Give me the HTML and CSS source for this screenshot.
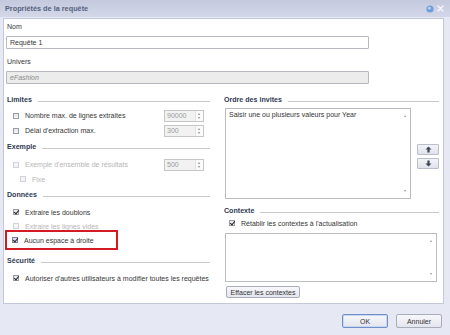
FILE: index.html
```html
<!DOCTYPE html>
<html lang="fr">
<head>
<meta charset="utf-8">
<title>Propriétés de la requête</title>
<link rel="stylesheet" href="styles.css">
</head>
<body>
<div class="dialog">
  <div class="titlebar">
    <span class="title">Propriétés de la requête</span>
    <span class="tb-icons">
      <svg class="help" width="8" height="8" viewBox="0 0 8 8"><circle cx="4" cy="4" r="3.6" fill="#6f9fd8"/><circle cx="3.3" cy="3.2" r="1.4" fill="#b9d4f2"/></svg>
      <svg class="close" width="7" height="7" viewBox="0 0 7 7"><path d="M1 1L6 6M6 1L1 6" stroke="#f4f5fa" stroke-width="1.6" stroke-linecap="round"/></svg>
    </span>
  </div>
  <div class="panel">
    <div class="lbl first">Nom</div>
    <div class="field">Requête 1</div>
    <div class="lbl second">Univers</div>
    <div class="field disabled">eFashion</div>

    <div class="columns">
      <div class="col left">
        <div class="hdr"><span>Limites</span></div>
        <div class="row r15"><span class="cb"></span><span class="txt">Nombre max. de lignes extraites</span><span class="spin dis">90000<i class="arr"></i></span></div>
        <div class="row r15"><span class="cb"></span><span class="txt">Délai d'extraction max.</span><span class="spin dis">300<i class="arr"></i></span></div>
        <div class="hdr mt"><span>Exemple</span></div>
        <div class="row r15 grey"><span class="cb off"></span><span class="txt">Exemple d'ensemble de résultats</span><span class="spin dis">500<i class="arr"></i></span></div>
        <div class="row r14 grey indent"><span class="cb off"></span><span class="txt">Fixe</span></div>
        <div class="hdr mt"><span>Données</span></div>
        <div class="row r14"><span class="cb on"></span><span class="txt">Extraire les doublons</span></div>
        <div class="row r14 grey"><span class="cb off"></span><span class="txt">Extraire les lignes vides</span></div>
        <div class="row r14 mark-wrap">
          <div class="mark"><span class="cb on hl"></span><span class="txt">Aucun espace à droite</span></div>
        </div>
        <div class="hdr mt2"><span>Sécurité</span></div>
        <div class="row r14"><span class="cb on"></span><span class="txt">Autoriser d'autres utilisateurs à modifier toutes les requêtes</span></div>
      </div>

      <div class="col right">
        <div class="hdr"><span>Ordre des invites</span></div>
        <div class="prompt-row">
          <div class="listbox">
            <span class="item">Saisir une ou plusieurs valeurs pour Year</span>
            <span class="sc up"></span><span class="sc down"></span>
          </div>
          <div class="movers">
            <div class="mv"><svg width="7" height="7" viewBox="0 0 7 7"><path d="M3.5 0.5L6.5 3.5H4.6V6.5H2.4V3.5H0.5Z" fill="#3e4656"/></svg></div>
            <div class="mv"><svg width="7" height="7" viewBox="0 0 7 7"><path d="M3.5 6.5L6.5 3.5H4.6V0.5H2.4V3.5H0.5Z" fill="#3e4656"/></svg></div>
          </div>
        </div>
        <div class="hdr ctx"><span>Contexte</span></div>
        <div class="row r12"><span class="cb on"></span><span class="txt">Rétablir les contextes à l'actualisation</span></div>
        <div class="ctxbox"><span class="sc up"></span><span class="sc down"></span></div>
        <div class="btn small">Effacer les contextes</div>
      </div>
    </div>
  </div>
  <div class="footer">
    <div class="btn main ok">OK</div>
    <div class="btn main">Annuler</div>
  </div>
</div>
</body>
</html>
```
FILE: styles.css
```css
* { box-sizing: border-box; }
html, body { margin: 0; padding: 0; }
body {
  width: 450px; height: 335px; overflow: hidden;
  background: #e6e8f3;
  font-family: "Liberation Sans", Arial, sans-serif;
  font-size: 7px;
  color: #363636;
}
.dialog { width: 450px; height: 335px; }
.titlebar {
  height: 17px;
  background: linear-gradient(#c4c9de, #d3d7e8);
  display: flex; align-items: center; justify-content: space-between;
  padding: 0 5px 0 5px;
}
.title { font-weight: bold; font-size: 7.3px; color: #56627e; }
.tb-icons { display: flex; align-items: center; gap: 3px; margin-right: 1px; }
.panel {
  margin: 1px 6px 0 3px;
  height: 286px;
  background: #fff;
  border: 1px solid #c3c8db;
  padding: 0 3px 0 3px;
}
.lbl { height: 10px; line-height: 10px; }
.lbl.first { margin-top: 3px; }
.lbl.second { margin-top: 8px; }
.field {
  margin-top: 4px; margin-left: -1px;
  width: 363px; height: 13px;
  border: 1px solid #b5b8bf; border-radius: 1px;
  padding: 0 3px; line-height: 11px;
}
.field.disabled { background: #ececec; color: #8a8a8a; font-style: italic; }
.columns { display: flex; gap: 13px; margin-top: 10px; }
.col.left { width: 204px; }
.col.right { width: 216px; }
.hdr {
  height: 12px; line-height: 12px;
  display: flex; align-items: center; gap: 6px;
  font-weight: bold; color: #2f3a52; font-size: 7.1px;
  margin-bottom: 2px;
}
.hdr::after { content: ""; flex: 1; height: 1px; background: #c8c8c8; margin-top: 2px; margin-right: 1px; }
.left .hdr.mt { margin-top: 3px; margin-bottom: 4px; }
.left .hdr.mt2 { margin-top: 8px; margin-bottom: 4px; }
.row { display: flex; align-items: center; padding-left: 6px; }
.r15 { height: 15px; }
.r14 { height: 14px; }
.r12 { height: 12px; padding-left: 5px; }
.row.indent { padding-left: 13px; }
.row.grey { color: #b6b6b6; }
.cb {
  width: 6px; height: 6px; flex: none;
  border: 1px solid #9a9ca4;
  background: linear-gradient(#e4e5ea, #f8f8fa);
  position: relative;
  margin-right: 6px;
}
.cb.off { border-color: #d2d3d8; background: #f4f4f6; }
.cb.on::after {
  content: ""; position: absolute; left: 1px; top: -1px;
  width: 2px; height: 4px;
  border: solid #222; border-width: 0 1.3px 1.3px 0;
  transform: rotate(40deg);
}
.cb.hl { background: #dcdcf0; border-color: #7c7ea8; }
.txt { white-space: nowrap; }
.spin {
  margin-left: auto; margin-right: 7px;
  width: 40px; height: 12px;
  border: 1px solid #c6c6c6;
  background: #f2f2f2; color: #9a9a9a;
  line-height: 10px; padding-left: 2px;
  position: relative;
}
.arr { position: absolute; right: 0; top: 0; width: 8px; height: 10px; background: #fafafa; border-left: 1px solid #e2e2e2; }
.arr::before, .arr::after {
  content: ""; position: absolute; left: 2px;
  border-left: 1.5px solid transparent; border-right: 1.5px solid transparent;
}
.arr::before { top: 2px; border-bottom: 2px solid #888; }
.arr::after { bottom: 2px; border-top: 2px solid #888; }
.mark-wrap { height: 20px; padding-left: 0; margin-top: -3px; margin-bottom: -3px; }
.mark {
  display: flex; align-items: center;
  width: 113px; height: 20px; margin-left: -2px;
  border: 2.5px solid #d41b24;
  padding-left: 5px;
}
.prompt-row { display: flex; }
.listbox {
  width: 186px; height: 91px; margin-left: 1px;
  border: 1px solid #b9bcc3;
  position: relative; padding: 2px 3px;
}
.item { color: #333; }
.sc { position: absolute; right: 4px; border-left: 1.5px solid transparent; border-right: 1.5px solid transparent; }
.sc.up { top: 6px; border-bottom: 2px solid #999; }
.sc.down { bottom: 6px; border-top: 2px solid #999; }
.movers { margin-left: 6px; margin-top: 36px; display: flex; flex-direction: column; gap: 3px; }
.mv {
  width: 22px; height: 11px;
  border: 1px solid #b9bdcc; border-radius: 1px;
  background: linear-gradient(#f3f4f8, #dfe2ec);
  display: flex; align-items: center; justify-content: center;
}
.hdr.ctx { margin-top: 6px; margin-bottom: 0; }
.ctxbox {
  margin-top: 4px; margin-left: 1px;
  width: 212px; height: 49px;
  border: 1px solid #b9bcc3;
  position: relative;
}
.btn {
  border: 1px solid #a9adbb; border-radius: 2px;
  background: linear-gradient(#f8f8fb, #e3e5ee);
  display: flex; align-items: center; justify-content: center;
  color: #333;
}
.btn.small { margin-top: 4px; margin-left: 2px; width: 74px; height: 12px; }
.footer { display: flex; justify-content: flex-end; gap: 8px; padding: 10px 8px 0 0; }
.btn.main { width: 46px; height: 14px; }
.btn.ok { border-color: #6f8fc8; box-shadow: inset 0 0 0 1px #c9d8f2; }
```
